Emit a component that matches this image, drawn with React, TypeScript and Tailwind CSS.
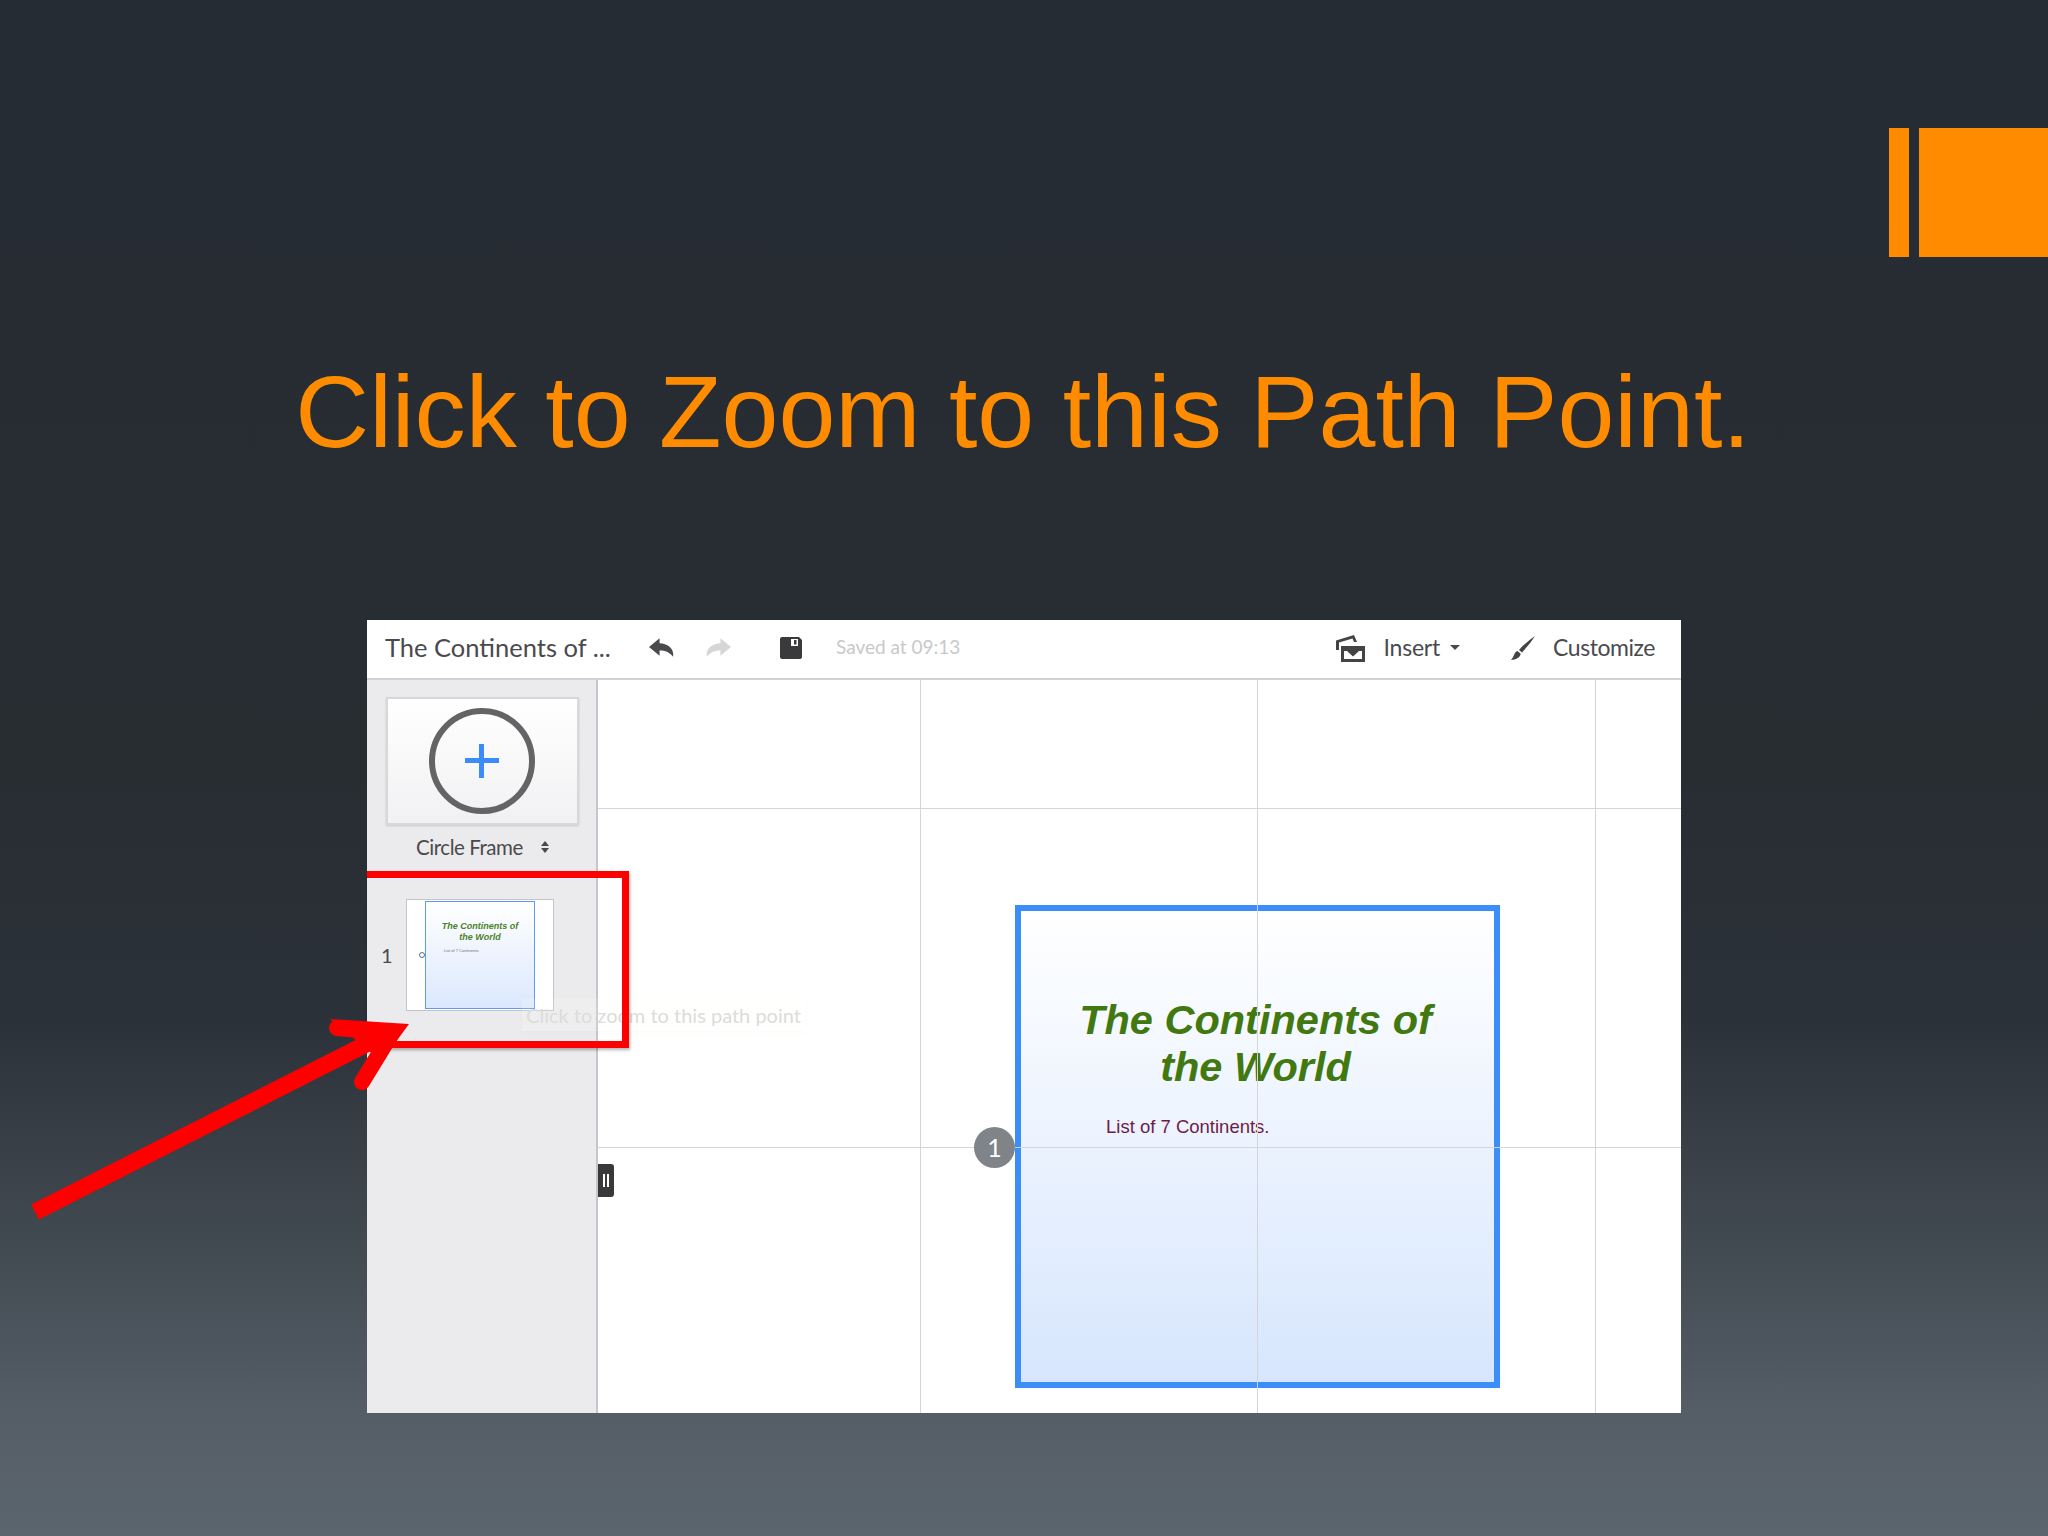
import React from "react";

const UI = "font-['Lato',sans-serif]";

function Undo({ className }: { className?: string }) {
  return (
    <svg viewBox="0 0 26 19" className={className} fill="currentColor">
      <path d="M11 0 L0 9 L11 18 L11 12.5 C17 12.5 21 14 25 19 C26.5 11 20 5.5 11 5 Z" />
    </svg>
  );
}

function Save() {
  return (
    <svg viewBox="0 0 22 22" className="w-[22px] h-[22px] text-[#3a3a3c]" fill="currentColor">
      <path fillRule="evenodd" d="M2 0 H19 L22 3 V20 Q22 22 20 22 H2 Q0 22 0 20 V2 Q0 0 2 0 Z M11 2 V9 H18 V2 Z" />
      <rect x="14" y="3" width="2.5" height="4.5" />
    </svg>
  );
}

function InsertIcon() {
  return (
    <svg viewBox="0 0 30 28" className="w-[30px] h-[28px] text-[#444]" fill="currentColor">
      <path fillRule="evenodd" d="M6 12 H30 V28 H6 Z M9 17 V25 H27 V17 Z" />
      <path d="M12 17 L18 22.5 L24 17 Z" />
      <path d="M1 16 V6.5 L19 1 L22 8 L19 8 L17.5 4.5 L4 8.5 V16 Z" />
    </svg>
  );
}

function Brush() {
  return (
    <svg viewBox="0 0 24 24" className="w-[24px] h-[24px] text-[#444]" fill="currentColor">
      <path d="M24 0 C20 3 13 8 8 14 L11 16.5 C16 11 21 5 24 0 Z" />
      <path d="M6.5 15 C3 16 3.5 20 0 24 C5 24 10 21 9.5 17.5 Z" />
    </svg>
  );
}

function Frame() {
  return (
    <div className="absolute left-[417px] top-[225px] w-[485px] h-[483px] border-[6px] border-[#3b8ef8] bg-gradient-to-b from-white to-[#d7e6fd]">
      <div className="font-['Liberation_Sans',sans-serif] italic font-bold text-[41.5px] leading-[47px] text-[#41780f] text-center mt-[85px] pr-[4px]">
        <div>The Continents of</div>
        <div>the World</div>
      </div>
      <p className="font-['Liberation_Sans',sans-serif] text-[18.5px] leading-[22px] text-[#6d1c48] ml-[85px] mt-[26px]">
        List of 7 Continents.
      </p>
    </div>
  );
}

function GridLines() {
  return (
    <div className="absolute inset-0 grid grid-cols-[323px_337px_338px_1fr] grid-rows-[129px_339px_1fr]">
      <div className="border-r border-b border-[#d4d4da]" />
      <div className="border-r border-b border-[#d4d4da]" />
      <div className="border-r border-b border-[#d4d4da]" />
      <div className="border-b border-[#d4d4da]" />
      <div className="border-r border-b border-[#d4d4da]" />
      <div className="border-r border-b border-[#d4d4da]" />
      <div className="border-r border-b border-[#d4d4da]" />
      <div className="border-b border-[#d4d4da]" />
      <div className="border-r border-[#d4d4da]" />
      <div className="border-r border-[#d4d4da]" />
      <div className="border-r border-[#d4d4da]" />
      <div />
    </div>
  );
}

function Thumb() {
  return (
    <div className="relative w-[148px] h-[112px] bg-white border border-[#c4c4c8] ml-[3px]">
      <div className="absolute left-[18px] top-[1px] w-[110px] h-[108px] border-[1.5px] border-[#5c9bee] bg-gradient-to-b from-white to-[#dbe8fd]">
        <div className="font-['Liberation_Sans',sans-serif] italic font-bold text-[9px] leading-[10.5px] text-[#4c8226] text-center mt-[19px]">
          <div>The Continents of</div>
          <div>the World</div>
        </div>
        <p className="font-['Liberation_Sans',sans-serif] text-[4px] leading-[5px] text-[#7a6a80] ml-[18px] mt-[6px]">
          List of 7 Continents.
        </p>
      </div>
      <div className="absolute left-[12px] top-[52px] w-[6px] h-[6px] rounded-full border-[1.5px] border-[#4f7299] bg-white" />
    </div>
  );
}

function AppWindow() {
  return (
    <div className={`relative w-[1314px] h-[793px] ml-[367px] mt-[153px] bg-white flex flex-col ${UI}`}>
      <header className="h-[60px] shrink-0 flex items-center border-b-2 border-[#d2d3d6] pl-[18px] pr-[26px] pb-[3px] text-[#4a4a4d]">
        <span className="text-[25.5px] w-[264px] whitespace-nowrap">The Continents of ...</span>
        <Undo className="w-[25px] h-[19px] text-[#4a4a4d]" />
        <Undo className="w-[25px] h-[19px] ml-[32px] text-[#d6d6d8] -scale-x-100" />
        <div className="ml-[49px]"><Save /></div>
        <span className="ml-[34px] text-[19px] text-[#c8c8ca] whitespace-nowrap">Saved at 09:13</span>
        <div className="ml-auto flex items-center">
          <InsertIcon />
          <span className="ml-[18px] text-[23px] tracking-[-0.2px]">Insert</span>
          <span className="ml-[10px] w-0 h-0 border-x-[5px] border-x-transparent border-t-[5px] border-t-[#4a4a4d]" />
          <div className="ml-[51px]"><Brush /></div>
          <span className="ml-[18px] text-[23px] tracking-[-0.45px]">Customize</span>
        </div>
      </header>
      <div className="flex-1 flex min-h-0">
        <aside className="w-[231px] shrink-0 bg-[#ebebed] border-r-2 border-[#c6c6ca] flex flex-col text-[#4a4a4d]">
          <button className="mt-[17px] ml-[19px] pr-[2px] w-[193px] h-[128px] bg-gradient-to-b from-white to-[#f1f1f3] border-2 border-[#d8d8da] shadow-[0_1px_2px_rgba(0,0,0,0.15)] flex items-center justify-center">
            <span className="relative w-[106px] h-[106px] rounded-full border-[6px] border-[#646466]">
              <span className="absolute left-[30px] top-[44px] w-[34px] h-[5px] bg-[#3b8cf8]" />
              <span className="absolute left-[44px] top-[30px] w-[5px] h-[34px] bg-[#3b8cf8]" />
            </span>
          </button>
          <div className="mt-[8px] h-[28px] flex items-center pl-[49px]">
            <span className="text-[20.5px] tracking-[-0.45px] whitespace-nowrap">Circle Frame</span>
            <span className="ml-[18px] flex flex-col gap-[2px]">
              <span className="w-0 h-0 border-x-[4px] border-x-transparent border-b-[5px] border-b-[#4a4a4d]" />
              <span className="w-0 h-0 border-x-[4px] border-x-transparent border-t-[5px] border-t-[#4a4a4d]" />
            </span>
          </div>
          <div className="mt-[38px] flex items-center pl-[14px]">
            <span className="w-[22px] text-[20px]">1</span>
            <Thumb />
          </div>
        </aside>
        <main className="relative flex-1 overflow-hidden">
          <Frame />
          <GridLines />
          <div className="absolute left-[376px] top-[447px] w-[41px] h-[41px] rounded-full bg-[#808488] flex items-center justify-center text-white text-[25px]">1</div>
        </main>
      </div>
      <div className="absolute left-[231px] top-[544px] w-[16px] h-[33px] rounded-r-[3px] bg-[#39393b] flex items-center justify-center gap-[2px]">
        <span className="w-[2px] h-[13px] bg-white" />
        <span className="w-[2px] h-[13px] bg-white" />
      </div>
      <div className="absolute left-[155px] top-[378px] h-[33px] w-[283px] bg-[#fffef8]/15 flex items-center justify-center shadow-[0_2px_6px_rgba(0,0,0,0.02)]">
        <span className="text-[20px] text-[#dcdcdc] whitespace-nowrap">Click to zoom to this path point</span>
      </div>
      <div className="absolute left-0 top-[251px] w-[262px] h-[177px] border-y-[7px] border-r-[7px] border-[#ff0000] shadow-[1px_2px_3px_rgba(0,0,0,0.3)]" />
    </div>
  );
}

function Arrow() {
  return (
    <svg className="absolute left-0 top-0" width="460" height="1260" viewBox="0 0 460 1260" fill="none" style={{ pointerEvents: "none" }}>
      <path d="M35 1212 L390 1032" stroke="#ff0000" strokeWidth="17" />
      <path d="M337 1028 L392 1033 M362 1082 L392 1033" stroke="#ff0000" strokeWidth="16" strokeLinecap="round" />
      <path d="M409 1024 L330 1019 L380 1060 L362 1088 Z" fill="#ff0000" />
    </svg>
  );
}

export default function App() {
  return (
    <div className="relative w-[2048px] h-[1536px] overflow-hidden bg-[linear-gradient(180deg,#262c34_0%,#272d31_50%,#2b3139_66%,#434b53_82%,#555e67_92%,#5b656e_100%)]">
      <div className="flex justify-end pt-[128px] gap-[10px]">
        <div className="w-[20px] h-[129px] bg-[#ff8c00]" />
        <div className="w-[129px] h-[129px] bg-[#ff8c00]" />
      </div>
      <h1 className="mt-[100px] h-[110px] leading-[110px] text-center pr-[2px] font-['Liberation_Sans',sans-serif] font-normal text-[102.3px] text-[#ff8c00] whitespace-nowrap">
        Click to Zoom to this Path Point.
      </h1>
      <AppWindow />
      <Arrow />
    </div>
  );
}
